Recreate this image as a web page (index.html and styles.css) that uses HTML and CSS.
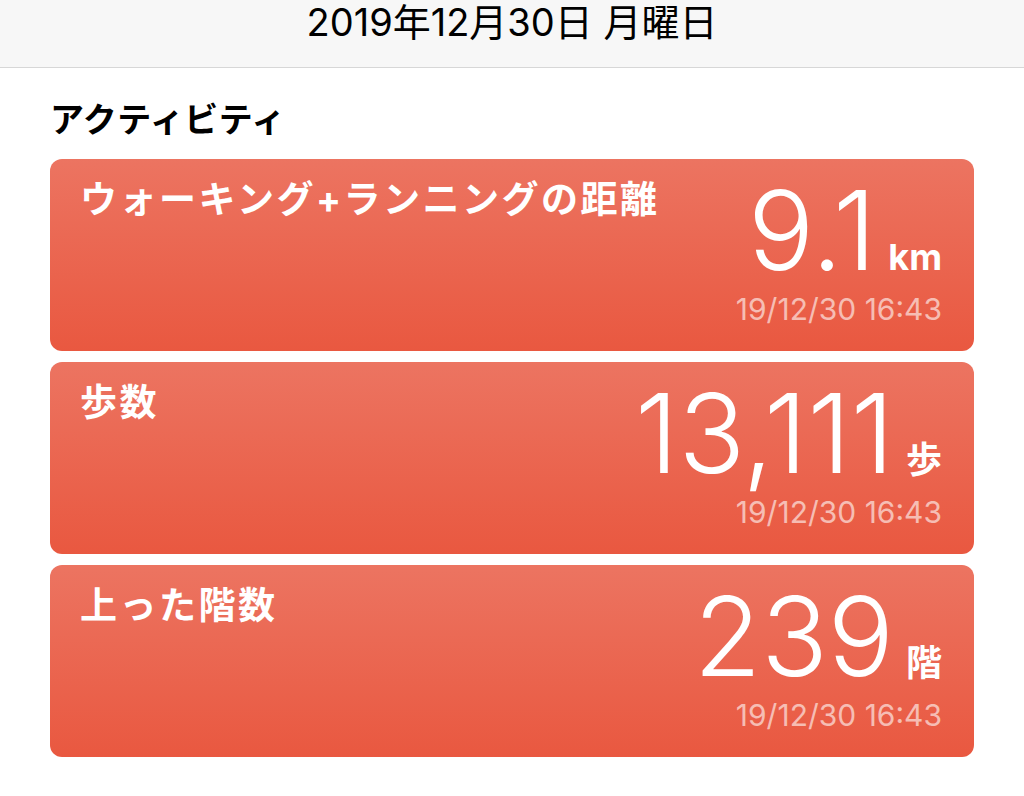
FILE: index.html
```html
<!DOCTYPE html>
<html lang="ja">
<head>
<meta charset="utf-8">
<link rel="stylesheet" href="styles.css">
</head>
<body>
<header class="topbar">
  <h1 class="topbar-title">2019年12月30日 月曜日</h1>
</header>
<main class="content">
  <h2 class="section-title">アクティビティ</h2>
  <div class="cards">
    <section class="card">
      <div class="card-title">ウォーキング+ランニングの距離</div>
      <div class="card-data">
        <div class="value-row"><span class="value">9.1</span><span class="unit">km</span></div>
        <div class="stamp">19/12/30 16:43</div>
      </div>
    </section>
    <section class="card">
      <div class="card-title">歩数</div>
      <div class="card-data">
        <div class="value-row"><span class="value">13,111</span><span class="unit">歩</span></div>
        <div class="stamp">19/12/30 16:43</div>
      </div>
    </section>
    <section class="card">
      <div class="card-title">上った階数</div>
      <div class="card-data">
        <div class="value-row"><span class="value">239</span><span class="unit">階</span></div>
        <div class="stamp">19/12/30 16:43</div>
      </div>
    </section>
  </div>
</main>
</body>
</html>
```
FILE: styles.css
```css
html, body {
  margin: 0;
  padding: 0;
  background: #ffffff;
}
body {
  font-family: "Inter", "Noto Sans CJK JP", sans-serif;
  color: #000;
}
.topbar {
  height: 67px;
  background: #f7f7f7;
  border-bottom: 1px solid #d7d7d7;
  display: flex;
  justify-content: center;
}
.topbar-title {
  margin: 0;
  font-size: 38px;
  font-weight: 400;
  line-height: 44px;
  color: #000;
}
.content {
  padding: 32px 50px 0 50px;
}
.section-title {
  margin: 0 0 19px 0;
  font-size: 34px;
  font-weight: 700;
  line-height: 40px;
  letter-spacing: 0.5px;
}
.cards {
  display: flex;
  flex-direction: column;
  gap: 11px;
}
.card {
  height: 192px;
  box-sizing: border-box;
  border-radius: 12px;
  background: linear-gradient(180deg, #ec7461 0%, #e95840 100%);
  display: flex;
  justify-content: space-between;
  align-items: flex-start;
  padding: 19px 32px 0 30px;
  color: #fff;
}
.card-title {
  font-size: 37px;
  font-weight: 700;
  line-height: 44px;
  letter-spacing: 2.5px;
}
.card-data {
  display: flex;
  flex-direction: column;
  align-items: flex-end;
  margin-top: 2px;
}
.value-row {
  display: flex;
  align-items: baseline;
  gap: 12px;
}
.value {
  font-size: 110px;
  font-weight: 300;
  line-height: 100px;
  letter-spacing: 0;
}
.unit {
  font-size: 36px;
  font-weight: 700;
  line-height: 36px;
}
.stamp {
  margin-top: 11px;
  font-size: 30px;
  line-height: 36px;
  color: rgba(255, 255, 255, 0.6);
}
```
